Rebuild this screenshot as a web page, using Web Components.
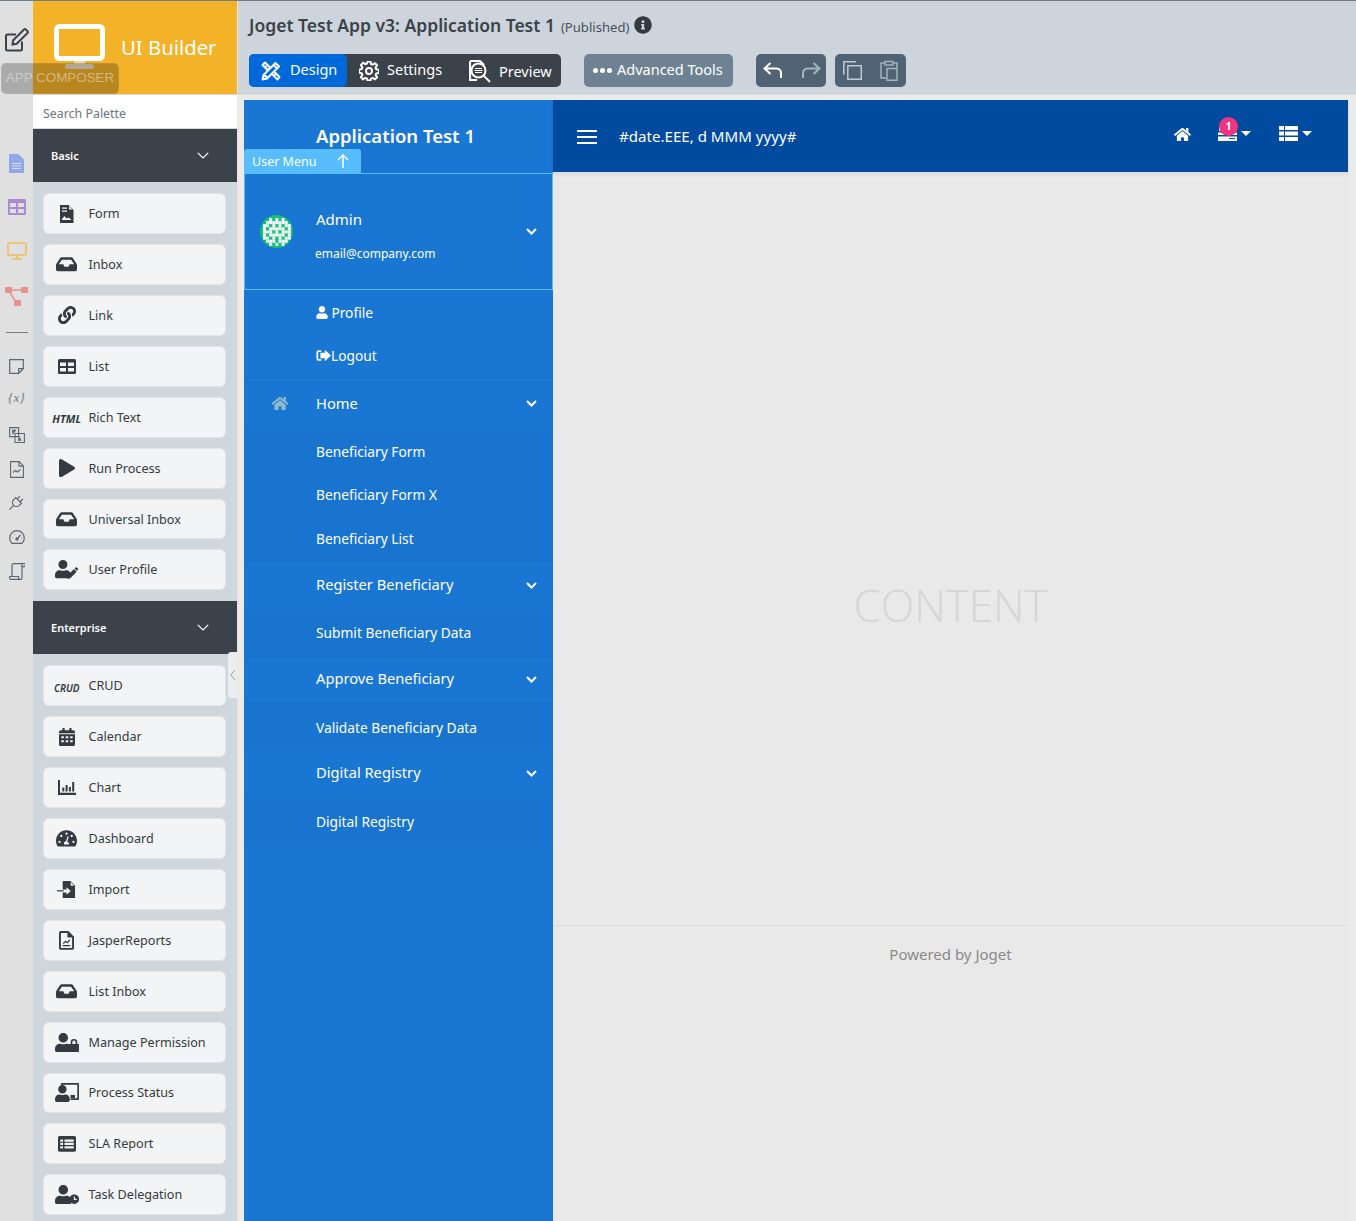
<!DOCTYPE html>
<html>
<head>
<meta charset="utf-8">
<title>UI Builder</title>
<style>
  html, body { margin: 0; height: 1221px; overflow: hidden; background: #ebebeb; }
  body { font-family: "Noto Sans", "Open Sans", sans-serif; }
</style>
</head>
<body>
<app-shell>
  <side-rail slot="rail"></side-rail>
  <palette-panel slot="palette">
    <palette-group title="Basic">
      <palette-item icon="form">Form</palette-item>
      <palette-item icon="inbox">Inbox</palette-item>
      <palette-item icon="link">Link</palette-item>
      <palette-item icon="list">List</palette-item>
      <palette-item tag="HTML">Rich Text</palette-item>
      <palette-item icon="play">Run Process</palette-item>
      <palette-item icon="inbox">Universal Inbox</palette-item>
      <palette-item icon="useredit">User Profile</palette-item>
    </palette-group>
    <palette-group title="Enterprise">
      <palette-item tag="CRUD" raised>CRUD</palette-item>
      <palette-item icon="calendar">Calendar</palette-item>
      <palette-item icon="chart">Chart</palette-item>
      <palette-item icon="gauge">Dashboard</palette-item>
      <palette-item icon="import">Import</palette-item>
      <palette-item icon="report">JasperReports</palette-item>
      <palette-item icon="inbox">List Inbox</palette-item>
      <palette-item icon="userlock">Manage Permission</palette-item>
      <palette-item icon="userboard">Process Status</palette-item>
      <palette-item icon="sla">SLA Report</palette-item>
      <palette-item icon="userclock">Task Delegation</palette-item>
    </palette-group>
  </palette-panel>
  <builder-head slot="head"></builder-head>
  <user-sidebar slot="side"></user-sidebar>
  <content-pane slot="content"></content-pane>
</app-shell>

<script>
// ===== 图标 =====
const P_USER = 'M224 256c70.7 0 128-57.3 128-128S294.7 0 224 0 96 57.3 96 128s57.3 128 128 128zm89.6 32h-16.7c-22.2 10.2-46.9 16-72.9 16s-50.6-5.8-72.9-16h-16.7C60.2 288 0 348.2 0 422.4V464c0 26.5 21.5 48 48 48h352c26.5 0 48-21.5 48-48v-41.6c0-74.2-60.2-134.4-134.4-134.4z';
const P_HOME = 'M280.37 148.26L96 300.11V464a16 16 0 0 0 16 16l112.06-.29a16 16 0 0 0 15.92-16V368a16 16 0 0 1 16-16h64a16 16 0 0 1 16 16v95.64a16 16 0 0 0 16 16.05L464 480a16 16 0 0 0 16-16V300L295.67 148.26a12.19 12.19 0 0 0-15.3 0zM571.6 251.47L488 182.56V44.05a12 12 0 0 0-12-12h-56a12 12 0 0 0-12 12v72.61L318.47 43a48 48 0 0 0-61 0L4.34 251.47a12 12 0 0 0-1.6 16.9l25.5 31A12 12 0 0 0 45.15 301l235.22-193.74a12.19 12.19 0 0 1 15.3 0L530.9 301a12 12 0 0 0 16.9-1.6l25.5-31a12 12 0 0 0-1.7-16.93z';
const userIn = (x, y, s) => `<g transform="translate(${x} ${y}) scale(${s})"><path d="${P_USER}"/></g>`;

const ICONS = {
  form: ['0 0 15 18', 15, '<path d="M1 0h8.500L14.500 5v13H1z"/><path fill="#f2f4f6" d="M10 1l3.500 3.600H10zM3 2.500h5v1.200H3zM3 5.500h5v1.200H3zM3 14l2.500-3 2 2.500 1.500-1 3 1.500v1H3z"/>'],
  inbox: ['0 0 576 512', 21, '<path d="M567.938 243.908L462.25 85.374A48.003 48.003 0 0 0 422.311 64H153.689a48 48 0 0 0-39.938 21.374L8.062 243.908A47.994 47.994 0 0 0 0 270.533V400c0 26.51 21.49 48 48 48h480c26.51 0 48-21.49 48-48V270.533a47.994 47.994 0 0 0-8.062-26.625zM162.252 128h251.497l85.333 128H376l-32 64H232l-32-64H76.918l85.334-128z"/>'],
  link: ['0 0 512 512', 18, '<path d="M326.612 185.391c59.747 59.809 58.927 155.698.36 214.59-.11.12-.24.25-.36.37l-67.2 67.2c-59.27 59.27-155.699 59.262-214.96 0-59.27-59.26-59.27-155.7 0-214.96l37.106-37.106c9.84-9.84 26.786-3.3 27.294 10.606.648 17.722 3.826 35.527 9.69 52.721 1.986 5.822.567 12.262-3.783 16.612l-13.087 13.087c-28.026 28.026-28.905 73.66-1.155 101.96 28.024 28.579 74.086 28.749 102.325.51l67.2-67.19c28.191-28.191 28.073-73.757 0-101.83-3.701-3.694-7.429-6.564-10.341-8.569a16.037 16.037 0 0 1-6.947-12.606c-.396-10.567 3.348-21.456 11.698-29.806l21.054-21.055c5.521-5.521 14.182-6.199 20.584-1.731a152.482 152.482 0 0 1 20.522 17.197zM467.547 44.449c-59.261-59.262-155.69-59.27-214.96 0l-67.2 67.2c-.12.12-.25.25-.36.37-58.566 58.892-59.387 154.781.36 214.59a152.454 152.454 0 0 0 20.521 17.196c6.402 4.468 15.064 3.789 20.584-1.731l21.054-21.055c8.35-8.35 12.094-19.239 11.698-29.806a16.037 16.037 0 0 0-6.947-12.606c-2.912-2.005-6.64-4.875-10.341-8.569-28.073-28.073-28.191-73.639 0-101.83l67.2-67.19c28.239-28.239 74.3-28.069 102.325.51 27.75 28.3 26.872 73.934-1.155 101.96l-13.087 13.087c-4.35 4.35-5.769 10.79-3.783 16.612 5.864 17.194 9.042 34.999 9.69 52.721.509 13.906 17.454 20.446 27.294 10.606l37.106-37.106c59.271-59.259 59.271-155.699.001-214.959z"/>'],
  list: ['0 0 18 15', 18, '<path fill-rule="evenodd" d="M1.500 0h15A1.500 1.500 0 0 1 18 1.500v12a1.500 1.500 0 0 1-1.500 1.500h-15A1.500 1.500 0 0 1 0 13.500v-12A1.500 1.500 0 0 1 1.500 0zM2 3.500v3.500h6V3.500zM10 3.500v3.500h6V3.500zM2 9v3.500h6V9zM10 9v3.500h6V9z"/>'],
  play: ['0 0 448 512', 16, '<path d="M424.4 214.7L72.4 6.6C43.8-10.3 0 6.1 0 47.9V464c0 37.5 40.7 60.1 72.4 41.3l352-208c31.4-18.5 31.5-64.1 0-82.6z"/>'],
  useredit: ['0 0 24 20', 23, userIn(0, 0, .037) + '<path d="M12.500 19.500l.6-3.300 6.700-6.700 2.800 2.800-6.700 6.700zM20.500 8.800l1-1a1 1 0 0 1 1.400 0l.9.900a1 1 0 0 1 0 1.400l-1 1z"/>'],
  calendar: ['0 0 448 512', 16, '<path fill-rule="evenodd" d="M0 176h448v288c0 26.500-21.500 48-48 48H48c-26.500 0-48-21.500-48-48zM64 232v56h72v-56zM188 232v56h72v-56zM312 232v56h72v-56zM64 344v56h72v-56zM188 344v56h72v-56zM312 344v56h72v-56z"/><path d="M48 64h48V16a16 16 0 0 1 16-16h32a16 16 0 0 1 16 16v48h128V16a16 16 0 0 1 16-16h32a16 16 0 0 1 16 16v48h48c26.500 0 48 21.500 48 48v32H0v-32c0-26.500 21.500-48 48-48z"/>'],
  chart: ['0 0 18 15', 18, '<path d="M0 0h2v12.800h16V15H0zM4.300 7.500h2v4H4.300zM7.600 5h2v6.500h-2zM10.900 7h2v4.500h-2zM14.200 2h2v9.500h-2z"/>'],
  gauge: ['0 0 576 512', 21, '<path fill-rule="evenodd" d="M288 32C128.900 32 0 160.900 0 320c0 52.800 14.300 102.300 39.100 144.800 5.600 9.600 16.300 15.200 27.400 15.200h443c11.100 0 21.800-5.600 27.400-15.200C561.700 422.300 576 372.800 576 320c0-159.100-128.900-288-288-288zM288 96a32 32 0 1 1 0 64 32 32 0 0 1 0-64zM96 384a32 32 0 1 1 0-64 32 32 0 0 1 0 64zM144 224a32 32 0 1 1 0-64 32 32 0 0 1 0 64zM479 384a32 32 0 1 1 0-64 32 32 0 0 1 0 64zM432 224a32 32 0 1 1 0-64 32 32 0 0 1 0 64zM354 428H222c-3-8-4-14-4-22 0-34 24-62 56-68l42-130c3-9 12-14 20-11 9 3 14 12 11 20l-42 130c30 10 53 31 53 59 0 8-1 14-4 22z"/>'],
  import: ['0 0 20 18', 19, '<path fill-rule="evenodd" d="M6 0h8l5 5v13H6v-6h4v2.500L14.500 10.500 10 6.500V9H6z"/><path d="M0 9.700h7v1.300H0z"/><path fill="#f2f4f6" d="M14.500 1l3.500 4h-3.500z"/>'],
  report: ['0 0 16 20', 15, '<path fill-rule="evenodd" d="M2 0h8l6 6v12a2 2 0 0 1-2 2H2a2 2 0 0 1-2-2V2a2 2 0 0 1 2-2zM2 2v16h12V7H9V2z"/><path fill="none" stroke="#343a40" stroke-width="1.300" d="M4 15.500h8M4.500 13.500l2.500-2.500 2 1.500 2.500-3"/>'],
  userlock: ['0 0 24 19', 24, userIn(0, 0, .037) + '<path fill-rule="evenodd" d="M14.500 11h1.200V9.300a3.300 3.300 0 0 1 6.600 0V11h1.200c.3 0 .5.2.5.5v6.500c0 .6-.4 1-1 1H15c-.6 0-1-.4-1-1v-6.500c0-.3.2-.5.5-.5zM17.300 11h3.400V9.300a1.700 1.700 0 0 0-3.400 0z"/>'],
  userboard: ['0 0 24 19', 24, userIn(0, 2, .033) + '<path d="M6 0h17a1 1 0 0 1 1 1v15a1 1 0 0 1-1 1H15.500v-1.700h6.800V1.700H7.700v2.800H6V1a1 1 0 0 1 1-1z"/><path d="M15.500 12h4.500v3h-4.500z"/>'],
  sla: ['0 0 512 448', 18, '<path fill-rule="evenodd" d="M48 0h416c26.500 0 48 21.500 48 48v352c0 26.500-21.500 48-48 48H48c-26.500 0-48-21.500-48-48V48C0 21.500 21.500 0 48 0zM64 96v64h80V96zM184 96v64h264V96zM64 192v64h80v-64zM184 192v64h264v-64zM64 288v64h80v-64zM184 288v64h264v-64z"/>'],
  userclock: ['0 0 24 19', 24, userIn(0, 0, .037) + '<path fill-rule="evenodd" d="M19.500 9.500a4.800 4.800 0 1 1 0 9.600 4.800 4.800 0 0 1 0-9.600zM19 11.500v3.500h3v-1.100h-1.900v-2.400z" transform="translate(-.2 -.1)"/>']
};

function faSvg(name, color) {
  const [box, w, body] = ICONS[name];
  return `<svg xmlns="http://www.w3.org/2000/svg" viewBox="${box}" width="${w}" fill="${color || '#343a40'}">${body}</svg>`;
}

// ===== 外层布局 =====
class AppShell extends HTMLElement {
  constructor() {
    super();
    this.attachShadow({ mode: 'open' });
    this.shadowRoot.innerHTML = `
      <style>
        :host {
          display: grid;
          grid-template-columns: 33px 205px 1fr;
          grid-template-rows: 95px 1fr;
          height: 1221px;
          box-sizing: border-box;
          background: #ebebeb;
          position: relative;
        }
        ::slotted([slot=rail]) { grid-column: 1; grid-row: 1 / 3; }
        ::slotted([slot=palette]) { grid-column: 2; grid-row: 1 / 3; }
        ::slotted([slot=head]) { grid-column: 3; grid-row: 1; }
        .stage {
          grid-column: 3; grid-row: 2;
          display: flex;
          padding: 5px 8px 0 6px;
          min-height: 0;
        }
        .topline { position: absolute; left: 0; right: 0; top: 0; height: 1px; background: #6f7d8a; z-index: 3; }
        .badge {
          position: absolute; left: 1px; top: 63px; width: 118px; height: 31px;
          box-sizing: border-box;
          background: rgba(0,0,0,.24);
          border: 1px solid rgba(255,255,255,.08);
          border-radius: 5px;
          color: rgba(255,255,255,.42);
          font: 13.400px/27px "Liberation Sans", Arial, sans-serif;
          text-align: center;
          white-space: nowrap;
          z-index: 4;
        }
      </style>
      <div class="topline"></div>
      <slot name="rail"></slot>
      <slot name="palette"></slot>
      <slot name="head"></slot>
      <div class="stage">
        <slot name="side"></slot>
        <slot name="content"></slot>
      </div>
      <div class="badge">APP COMPOSER</div>
    `;
  }
}
customElements.define('app-shell', AppShell);

// ===== 左侧图标栏 =====
class SideRail extends HTMLElement {
  constructor() {
    super();
    this.attachShadow({ mode: 'open' });
    const c = '#5c6670';
    this.shadowRoot.innerHTML = `
      <style>
        :host { display: block; background: #e0e0e0; height: 1221px; overflow: hidden; }
        .r { display: flex; flex-direction: column; align-items: center; }
        .r > * { flex: none; display: block; }
        hr { width: 22px; height: 1px; border: 0; background: #767f88; margin: 0; }
        .x { font: italic 13px/16px "Liberation Serif", serif; color: #6f7780; letter-spacing: .3px; }
      </style>
      <div class="r">
        <svg style="margin-top:28px" width="26" height="24" viewBox="0 0 26 24" fill="none" stroke="#3b4249" stroke-width="2">
          <path d="M18 13.500V21a1.500 1.500 0 0 1-1.500 1.500h-13A1.500 1.500 0 0 1 2 21V8a1.500 1.500 0 0 1 1.500-1.500H12"/>
          <path d="M8.500 16.500l.7-4.200L20 1.500a1.300 1.300 0 0 1 1.900 0l1.600 1.600a1.300 1.300 0 0 1 0 1.900L12.700 15.800z"/>
        </svg>
        <svg style="margin-top:102px" width="15" height="19" viewBox="0 0 15 19" fill="#8fa8ea"><path fill-rule="evenodd" d="M0 0h9.500L15 5.500V19H0zM3 9v1h9V9zM3 11.500v1h9v-1zM3 14v1h9v-1z"/></svg>
        <svg style="margin-top:26px" width="18" height="16" viewBox="0 0 18 16" fill="#a98dd0"><path fill-rule="evenodd" d="M1 0h16a1 1 0 0 1 1 1v14a1 1 0 0 1-1 1H1a1 1 0 0 1-1-1V1a1 1 0 0 1 1-1zM2 4v4h6V4zM10 4v4h6V4zM2 10v4h6v-4zM10 10v4h6v-4z"/></svg>
        <svg style="margin-top:27px" width="20" height="18" viewBox="0 0 20 18" fill="none" stroke="#ecc47e" stroke-width="2"><rect x="1" y="1" width="18" height="12" rx="1"/><path d="M10 13v3M5 17h10"/></svg>
        <svg style="margin-top:27px" width="23" height="19" viewBox="0 0 23 19" fill="#e6918c"><rect width="7" height="6" y="0" rx="1"/><rect x="16" width="7" height="6" rx="1"/><rect x="9" y="13" width="7" height="6" rx="1"/><path d="M6 2.200h10v1.600H6zM5.500 5l5 8-1.300.8-5-8z"/></svg>
        <hr style="margin-top:26px">
        <svg style="margin-top:26px" width="15" height="15" viewBox="0 0 15 15" fill="none" stroke="${c}" stroke-width="1.200"><path d="M.7.700h13.600v9l-4.600 4.600H.7zM14 9.700H9.700V14"/></svg>
        <div class="x" style="margin-top:16px">{x}</div>
        <svg style="margin-top:21px" width="16" height="16" viewBox="0 0 16 16" fill="none" stroke="${c}" stroke-width="1.100"><path d="M.6.600h9v9h-9zM6 6.500h9.400v9H6z"/><path d="M3 3h4L3.500 7.500M12 13.500h-3l1.500-4z" fill="${c}" stroke-width=".6"/></svg>
        <svg style="margin-top:18px" width="14" height="17" viewBox="0 0 14 17" fill="none" stroke="${c}" stroke-width="1.100"><path d="M.6.600h8.500l4.300 4.300v11.500H.6zM9 .6v4.500h4.400M3 11.500l2.500-2 2 1.500 3-2.500"/></svg>
        <svg style="margin-top:16px" width="17" height="17" viewBox="0 0 17 17" fill="none" stroke="${c}" stroke-width="1.200"><g transform="rotate(45 8.500 8.500)"><path d="M4.500 5.500h8v3a4 4 0 0 1-8 0zM6.500 1.500v4M10.500 1.500v4M8.500 12.500v6"/></g></svg>
        <svg style="margin-top:19px" width="16" height="14" viewBox="0 0 16 14" fill="none" stroke="${c}" stroke-width="1.200"><path d="M3 13.300a7.300 7.300 0 1 1 10 0zM8 9l3.500-4"/><circle cx="8" cy="9" r="1.100" fill="${c}"/><path d="M3.500 7.500h.6M12 8h.6M5.200 4.500h.5"/></svg>
        <svg style="margin-top:19px" width="16" height="17" viewBox="0 0 16 17" fill="none" stroke="${c}" stroke-width="1.200"><path d="M3 13V2.300A1.700 1.700 0 0 1 4.700.6H15a1.500 1.500 0 0 1 0 3h-2M13 1v11.500M.6 13.500h9V15a1.500 1.500 0 0 0 1.400 1.400H2a1.500 1.500 0 0 1-1.400-1.400zM10.800 16.400a1.500 1.500 0 0 0 2.200-1.400v-2.500"/></svg>
      </div>
    `;
  }
}
customElements.define('side-rail', SideRail);

// ===== 组件面板 =====
class PalettePanel extends HTMLElement {
  constructor() {
    super();
    this.attachShadow({ mode: 'open' });
    this.shadowRoot.innerHTML = `
      <style>
        :host {
          display: block;
          background: #cfd6dc;
          height: 1221px;
          overflow: hidden;
          box-sizing: border-box;
          border-right: 1px solid #e6e6e6;
          position: relative;
        }
        .brand {
          height: 93px;
          margin-top: 1px;
          background: #f4b229;
          box-sizing: border-box;
          display: flex;
          align-items: center;
          padding: 0 0 0 21px;
          color: #fff;
        }
        .brand svg { flex: none; margin-bottom: 2px; }
        .brand span { font-size: 20.300px; margin-left: 16px; margin-bottom: 2px; white-space: nowrap; }
        .search {
          height: 35px;
          box-sizing: border-box;
          background: #fff;
          border-top: 1px solid #d8d8d8;
          border-bottom: 1px solid #d8d8d8;
          padding-left: 10px;
          font-size: 12.400px;
          line-height: 37px;
          color: #6c757d;
        }
        .handle {
          position: absolute; right: -1px; top: 652px; width: 10px; height: 46px;
          background: #ebedf0; border-radius: 3px 0 0 3px;
          display: flex; align-items: center; justify-content: center;
        }
      </style>
      <div class="brand">
        <svg width="51" height="45" viewBox="0 0 51 45">
          <rect x="2.500" y="2.500" width="46" height="32" rx="3" fill="none" stroke="#fff" stroke-width="5"/>
          <rect x="20" y="37" width="11" height="4" fill="#f3d999"/>
          <rect x="11" y="40" width="29" height="5" rx="2.500" fill="#e9dcc0"/>
        </svg>
        <span>UI Builder</span>
      </div>
      <div class="search">Search Palette</div>
      <slot></slot>
      <div class="handle">
        <svg width="6" height="12" viewBox="0 0 6 12" fill="none" stroke="#9aa2aa"><path d="M5 1L1 6l4 5"/></svg>
      </div>
    `;
  }
}
customElements.define('palette-panel', PalettePanel);

class PaletteGroup extends HTMLElement {
  constructor() {
    super();
    this.attachShadow({ mode: 'open' });
  }
  connectedCallback() {
    this.shadowRoot.innerHTML = `
      <style>
        :host { display: block; }
        .t {
          height: 53px;
          background: #3b4249;
          color: #fff;
          display: flex;
          align-items: center;
          justify-content: space-between;
          padding: 0 28px 0 18px;
          font-size: 11px;
          font-weight: 600;
        }
        .items {
          display: flex;
          flex-direction: column;
          gap: 10px;
          padding: 11.250px 11px 10.750px 10px;
        }
      </style>
      <div class="t">
        <span>${this.getAttribute('title')}</span>
        <svg width="12" height="7" viewBox="0 0 12 7" fill="none" stroke="#fff" stroke-width="1.200"><path d="M.8.800L6 6l5.200-5.200"/></svg>
      </div>
      <div class="items"><slot></slot></div>
    `;
  }
}
customElements.define('palette-group', PaletteGroup);

class PaletteItem extends HTMLElement {
  constructor() {
    super();
    this.attachShadow({ mode: 'open' });
  }
  connectedCallback() {
    const tag = this.getAttribute('tag');
    const icon = this.getAttribute('icon');
    const fig = tag ? `<b class="tag ${tag.toLowerCase()}">${tag}</b>` : faSvg(icon);
    this.shadowRoot.innerHTML = `
      <style>
        :host {
          display: flex;
          align-items: center;
          height: 40.900px;
          box-sizing: border-box;
          background: #f2f4f6;
          border: 1px solid #e3e6e9;
          border-radius: 6px;
          color: #343a40;
          font-size: 12.600px;
          white-space: nowrap;
        }
        .ic { flex: none; width: 44.500px; padding-left: 1px; box-sizing: border-box; display: flex; justify-content: center; align-items: center; }
        .ic svg { display: block; }
        .tag { font: italic 700 11px/14px "Noto Sans", sans-serif; color: #343a40; margin-top: 4px; }
        .tag.crud { font-size: 10px; font-weight: 600; }
        :host([raised]) .lb { margin-top: -1px; }
      </style>
      <div class="ic">${fig}</div>
      <span class="lb"><slot></slot></span>
    `;
  }
}
customElements.define('palette-item', PaletteItem);

// ===== 顶部工具栏 =====
class BuilderHead extends HTMLElement {
  constructor() {
    super();
    this.attachShadow({ mode: 'open' });
    this.shadowRoot.innerHTML = `
      <style>
        :host {
          display: block;
          background: #cdd4db;
          box-sizing: border-box;
          height: 95px;
          border-bottom: 1px solid #dcdcdc;
          padding: 13px 0 0 11px;
          color: #3b4249;
        }
        .title { display: flex; align-items: center; height: 24px; white-space: nowrap; }
        .title b { font-size: 17.500px; font-weight: 600; }
        .title small { font-size: 13.100px; margin-left: 6px; margin-top: 4px; color: #4a5159; }
        .title svg { margin-left: 5px; margin-top: 0; }
        .bars { display: flex; margin-top: 17px; color: #fff; font-size: 14.500px; white-space: nowrap; }
        .grp { display: flex; height: 33px; border-radius: 5px; align-items: center; }
        .main { background: #3b4249; width: 312px; }
        .btn { display: flex; align-items: center; height: 33px; }
        .btn span, .adv span { margin-top: -4px; }
        .design { background: #0069d9; width: 98px; border-radius: 5px; padding-left: 12px; box-sizing: border-box; gap: 9px; }
        .settings { width: 108px; padding-left: 12px; box-sizing: border-box; gap: 8px; }
        .preview { padding-left: 14px; gap: 8px; }
        .preview span { margin-top: 0; }
        .adv { background: #6f8293; margin-left: 23px; width: 149px; padding-left: 9px; box-sizing: border-box; gap: 5px; }
        .dots { display: flex; gap: 2px; }
        .dots i { width: 5px; height: 5px; border-radius: 50%; background: #fff; }
        .hist { background: #4f6375; margin-left: 23px; width: 70px; justify-content: space-between; padding: 0 5px 0 7px; box-sizing: border-box; }
        .clip { background: #4f6375; margin-left: 9px; width: 71px; justify-content: space-between; padding: 0 8px 0 8px; box-sizing: border-box; }
      </style>
      <div class="title">
        <b>Joget Test App v3: Application Test 1</b>
        <small>(Published)</small>
        <svg width="18" height="18" viewBox="0 0 512 512" fill="#343a40"><path d="M256 8C119.043 8 8 119.083 8 256c0 136.997 111.043 248 248 248s248-111.003 248-248C504 119.083 392.957 8 256 8zm0 110c23.196 0 42 18.804 42 42s-18.804 42-42 42-42-18.804-42-42 18.804-42 42-42zm56 254c0 6.627-5.373 12-12 12h-88c-6.627 0-12-5.373-12-12v-24c0-6.627 5.373-12 12-12h12v-64h-12c-6.627 0-12-5.373-12-12v-24c0-6.627 5.373-12 12-12h64c6.627 0 12 5.373 12 12v100h12c6.627 0 12 5.373 12 12v24z"/></svg>
      </div>
      <div class="bars">
        <div class="grp main">
          <div class="btn design">
            <svg width="20" height="20" viewBox="0 0 20 20" fill="none" stroke="#fff" stroke-width="2" stroke-linejoin="round">
              <path d="M1.500 18.500l1-4.500L14.500 2l3.500 3.500L6 17.500zM12.500 4l3.500 3.500M3 13.500l3.500 3.500"/>
              <path d="M7 9.500L1.500 4 4 1.500l5.500 5.500M11 13l5.500 5.500 2-2.500L13 10.500M4 6.500l1.500-1.500M6.500 9L8 7.500M13.500 14l1.500-1.500"/>
            </svg>
            <span>Design</span>
          </div>
          <div class="btn settings">
            <svg width="20" height="20" viewBox="0 0 20 20" fill="none" stroke="#fff" stroke-width="2" stroke-linejoin="round">
              <circle cx="10" cy="10" r="3"/>
              <path d="M8.500 1h3l.5 2.600 1.700.7L16 2.800l2.100 2.100-1.500 2.300.7 1.700 2.700.6v3l-2.700.5-.7 1.700 1.500 2.300L16 19l-2.300-1.500-1.700.7-.5 1.800h-3L8 18.200l-1.700-.7L4 19l-2.100-2.200 1.500-2.300-.7-1.700L0 12.300v-3l2.700-.6.7-1.700-1.500-2.300L4 2.300l2.300 1.500 1.700-.7z" transform="translate(0 -.6)"/>
            </svg>
            <span>Settings</span>
          </div>
          <div class="btn preview">
            <svg width="22" height="24" viewBox="0 0 22 24" fill="none" stroke="#fff">
              <path d="M1 2h10l4 4M1 2v19h7" stroke-width="2.200"/>
              <circle cx="9.500" cy="11.500" r="7" stroke-width="2"/>
              <path d="M6 9.500h7M5.500 11.500h8M6 13.500h7" stroke-width="1.200"/>
              <path d="M14.500 16.500L21 23" stroke-width="1.800"/>
            </svg>
            <span>Preview</span>
          </div>
        </div>
        <div class="grp adv">
          <div class="dots"><i></i><i></i><i></i></div>
          <span>Advanced Tools</span>
        </div>
        <div class="grp hist">
          <svg width="20" height="17" viewBox="0 0 20 17" fill="none" stroke="#fff" stroke-width="2"><path d="M7.500 1L1.500 6.500l6 5.500M2 6.500h11.500a4.500 4.500 0 0 1 4.500 4.500v5"/></svg>
          <svg width="20" height="17" viewBox="0 0 20 17" fill="none" stroke="#a7b3be" stroke-width="2"><path d="M12.500 1l6 5.500-6 5.500M18 6.500H6.500A4.500 4.500 0 0 0 2 11v5"/></svg>
        </div>
        <div class="grp clip">
          <svg width="19" height="19" viewBox="0 0 19 19" fill="none" stroke="#c2c9cf" stroke-width="1.500"><path d="M13 .8H.8v13M4.800 4.800h13.500v13.500H4.800z"/></svg>
          <svg width="18" height="21" viewBox="0 0 18 21" fill="none" stroke="#a7b3be" stroke-width="1.500"><path d="M5 3H1v15h5M13 3h4v5M5 1.500h8V5H5zM7 8.500h10v11.700H7z"/></svg>
        </div>
      </div>
    `;
  }
}
customElements.define('builder-head', BuilderHead);

// ===== 预览区侧边栏 =====
class NavRow extends HTMLElement {
  constructor() {
    super();
    this.attachShadow({ mode: 'open' });
    this.shadowRoot.innerHTML = `
      <style>
        :host {
          display: flex;
          align-items: center;
          box-sizing: border-box;
          padding: 0 16px 0 72px;
          color: #fff;
          font-size: 13.750px;
          white-space: nowrap;
          position: relative;
          background: var(--row-bg, transparent);
        }
        :host([head]) { font-size: 14.700px; }
        span { flex: 1; display: flex; align-items: center; margin-bottom: var(--mb, 0); }
        .chev { display: none; }
        :host([head]) .chev { display: block; }
        ::slotted(svg) { margin-right: 2px; }
      </style>
      <span><slot></slot></span>
      <svg class="chev" width="11" height="7" viewBox="0 0 11 7" fill="none" stroke="#fff" stroke-width="2"><path d="M1 1l4.500 4.500L10 1"/></svg>
    `;
  }
}
customElements.define('nav-row', NavRow);

class UserSidebar extends HTMLElement {
  constructor() {
    super();
    this.attachShadow({ mode: 'open' });
    // 头像图案
    let dots = '';
    const rows = ['..X.X.X..', '.XXXXXXX.', 'XX.X.X.XX', 'X.XXXXX.X', 'XXX.X.XXX', 'X.XXXXX.X', 'XX.X.X.XX', '.XXX.XXX.', '..X.X.X..'];
    rows.forEach((r, y) => [...r].forEach((c, x) => {
      if (c === 'X') dots += `<rect x="${3 + x * 3.1}" y="${3 + y * 3.1}" width="3" height="3"/>`;
    }));
    this.shadowRoot.innerHTML = `
      <style>
        :host {
          display: block;
          flex: none;
          width: 309px;
          height: 1121px;
          background: #1976d2;
          position: relative;
          color: #fff;
        }
        .brand { height: 73px; padding: 23px 0 0 72px; box-sizing: border-box; font-size: 18.500px; font-weight: 600; line-height: 25px; white-space: nowrap; }
        .tab {
          position: absolute; left: 0; top: 49px; width: 117px; height: 24px;
          background: #57bdfd; border-radius: 3px 3px 0 0;
          display: flex; align-items: center; justify-content: space-between;
          padding: 0 12px 0 8px; box-sizing: border-box;
          font-size: 12.500px; white-space: nowrap;
        }
        .user {
          height: 117px; box-sizing: border-box;
          border: 1px solid #57bdfd;
          display: flex; align-items: center;
          padding: 0 15px 0 15px;
        }
        .user svg.av { flex: none; }
        .who { flex: 1; margin-left: 22px; margin-top: 9px; }
        .who div { font-size: 15px; line-height: 20px; margin-left: 1px; margin-bottom: 16px; }
        .who small { font-size: 12px; line-height: 18px; display: block; }
        .me { border-bottom: 1px solid #1a6ec4; }
        .sect { --row-bg: #1874cf; --mb: 2px; }
        nav-row[head] { --mb: 2px; }
        nav-row.up { --mb: 4px; }
      </style>
      <div class="brand">Application Test 1</div>
      <div class="tab"><span>User Menu</span>
        <svg width="12" height="14" viewBox="0 0 12 14" fill="none" stroke="#fff" stroke-width="1.500"><path d="M1 6l5-5 5 5M6 1v13"/></svg>
      </div>
      <div class="user">
        <svg class="av" width="33" height="33" viewBox="0 0 33 33">
          <circle cx="16.500" cy="16.500" r="16.500" fill="#12c176"/>
          <g fill="#fff">${dots}</g>
        </svg>
        <div class="who"><div>Admin</div><small>email@company.com</small></div>
        <svg width="11" height="7" viewBox="0 0 11 7" fill="none" stroke="#fff" stroke-width="2"><path d="M1 1l4.500 4.500L10 1"/></svg>
      </div>
      <nav-row style="height:44px"><svg width="12" height="13" viewBox="0 0 448 512" fill="#fff"><path d="${P_USER}"/></svg>&#8202;Profile</nav-row>
      <nav-row class="me" style="height:44px"><svg style="margin-right:0" width="15" height="13" viewBox="0 0 17 14" fill="#fff"><path d="M6 1H3a2.500 2.500 0 0 0-2.500 2.500v7A2.500 2.500 0 0 0 3 13h3v-2H3a.5.5 0 0 1-.5-.5v-7A.5.5 0 0 1 3 3h3zM10 .5L17 7l-7 6.500V10H5V4h5z"/></svg>Logout</nav-row>
      <nav-row head style="height:52px;padding-bottom:2px;--mb:0px">
        <svg style="position:absolute;left:27px;top:18px" width="18" height="15" viewBox="0 0 576 512" fill="#8fbccb"><path d="${P_HOME}"/></svg>
        Home</nav-row>
      <nav-row class="sect" style="height:44px">Beneficiary Form</nav-row>
      <nav-row class="sect" style="height:43.500px">Beneficiary Form X</nav-row>
      <nav-row class="sect" style="height:43.500px">Beneficiary List</nav-row>
      <nav-row head style="height:48px">Register Beneficiary</nav-row>
      <nav-row class="sect" style="height:48px">Submit Beneficiary Data</nav-row>
      <nav-row head class="up" style="height:46px;padding-bottom:1px">Approve Beneficiary</nav-row>
      <nav-row class="sect" style="height:47px;padding-top:3px">Validate Beneficiary Data</nav-row>
      <nav-row head class="up" style="height:47px">Digital Registry</nav-row>
      <nav-row class="sect" style="height:50px">Digital Registry</nav-row>
    `;
  }
}
customElements.define('user-sidebar', UserSidebar);

// ===== 内容区 =====
class ContentPane extends HTMLElement {
  constructor() {
    super();
    this.attachShadow({ mode: 'open' });
    this.shadowRoot.innerHTML = `
      <style>
        :host {
          display: flex;
          flex-direction: column;
          flex: 1;
          min-width: 0;
          background: #e9e9e9;
          height: 1121px;
        }
        .bar {
          height: 72px; flex: none;
          background: #004a9f;
          box-shadow: 0 2px 4px rgba(0,0,0,.08);
          display: flex; align-items: center;
          color: #fff;
          padding: 0 36px 0 24px;
          position: relative;
        }
        .burger { display: flex; flex-direction: column; gap: 4px; width: 20px; margin-top: 1px; }
        .burger i { height: 2px; background: #fff; }
        .date { margin-left: 22px; font-size: 15.100px; flex: 1; white-space: nowrap; }
        .tray { position: relative; margin-left: 27px; margin-top: -6px; }
        .caret { width: 0; height: 0; border: 5px solid transparent; border-top-color: #fff; border-bottom: 0; margin-left: 4px; margin-top: -6px; }
        .count {
          position: absolute; left: 1px; top: -9px;
          width: 19px; height: 19px; border-radius: 50%;
          background: #f0357f; color: #fff;
          font-size: 10px; font-weight: 700; line-height: 19px; text-align: center;
        }
        .body { height: 754px; flex: none; box-sizing: border-box; padding-top: 405px; text-align: center; font-size: 43.800px; line-height: 56px; font-weight: 300; color: #d6d6d6; border-bottom: 1px solid #dcdcdc; font-family: "Open Sans", sans-serif; }
        .foot { text-align: center; padding-top: 18px; font-size: 15px; line-height: 20px; color: #8a8a8a; }
      </style>
      <div class="bar">
        <div class="burger"><i></i><i></i><i></i></div>
        <div class="date">#date.EEE, d MMM yyyy#</div>
        <svg style="margin-top:-4px" width="17" height="15" viewBox="0 0 576 512" fill="#fff"><path d="${P_HOME}"/></svg>
        <div class="tray">
          <svg style="display:block" width="19" height="15" viewBox="0 0 19 15" fill="#fff"><path fill-rule="evenodd" d="M1 0h17v5H1zM0 6.500h19V9H0zM0 10.500h19V15H0zM11 12v1h6v-1z"/></svg>
          <div class="count">1</div>
        </div>
        <div class="caret"></div>
        <svg style="margin-left:28px;margin-top:-6px" width="19" height="15" viewBox="0 0 19 15" fill="#fff"><path d="M0 0h5v4H0zM6 0h13v4H6zM0 5.500h5v4H0zM6 5.500h13v4H6zM0 11h5v4H0zM6 11h13v4H6z"/></svg>
        <div class="caret"></div>
      </div>
      <div class="body">CONTENT</div>
      <div class="foot">Powered by Joget</div>
    `;
  }
}
customElements.define('content-pane', ContentPane);
</script>
</body>
</html>
